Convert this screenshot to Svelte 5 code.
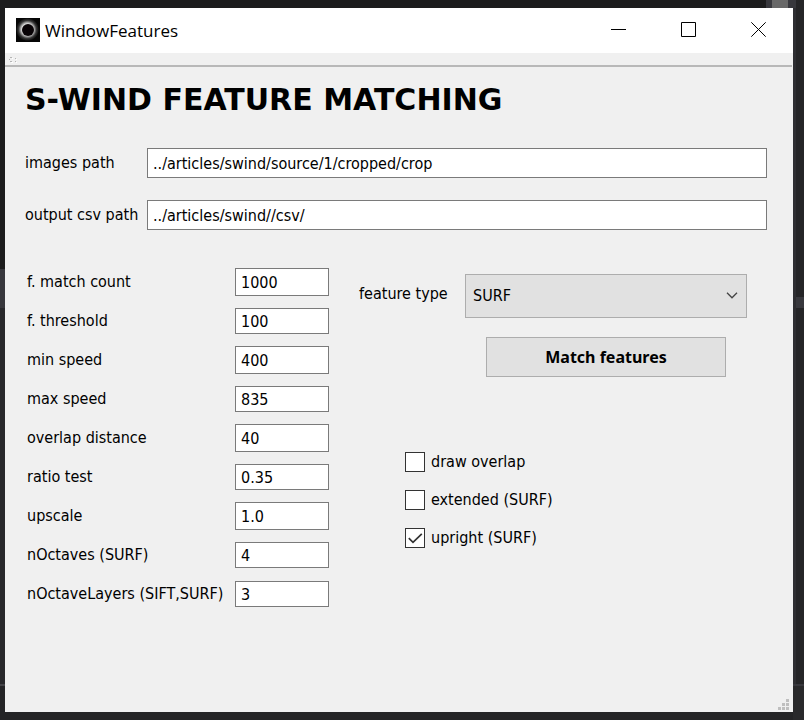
<script>
  const paths = $state([
    { id: 'images', label: 'images path', value: '../articles/swind/source/1/cropped/crop' },
    { id: 'csv', label: 'output csv path', value: '../articles/swind//csv/' }
  ]);

  const params = $state([
    { id: 'count', label: 'f. match count', value: '1000' },
    { id: 'threshold', label: 'f. threshold', value: '100' },
    { id: 'min', label: 'min speed', value: '400' },
    { id: 'max', label: 'max speed', value: '835' },
    { id: 'overlap', label: 'overlap distance', value: '40' },
    { id: 'ratio', label: 'ratio test', value: '0.35' },
    { id: 'upscale', label: 'upscale', value: '1.0' },
    { id: 'octaves', label: 'nOctaves (SURF)', value: '4' },
    { id: 'layers', label: 'nOctaveLayers (SIFT,SURF)', value: '3' }
  ]);

  const options = $state([
    { label: 'draw overlap', on: false },
    { label: 'extended (SURF)', on: false },
    { label: 'upright (SURF)', on: true }
  ]);

  let featureType = $state('SURF');
</script>

<div class="desktop">
  <main class="window">
    <header class="titlebar">
      <svg class="appicon" width="24" height="24" viewBox="0 0 24 24" aria-hidden="true">
        <defs>
          <radialGradient id="corona">
            <stop offset="0.5" stop-color="#ddd" />
            <stop offset="0.62" stop-color="#999" />
            <stop offset="0.78" stop-color="#383838" />
            <stop offset="1" stop-color="#060606" />
          </radialGradient>
        </defs>
        <rect width="24" height="24" fill="#060606" />
        <circle cx="11.5" cy="11.5" r="11.5" fill="url(#corona)" />
        <circle cx="12" cy="12" r="6" fill="#080306" />
      </svg>
      <span class="name">WindowFeatures</span>
      <div class="controls">
        <button aria-label="Minimize">
          <svg width="15" height="15" viewBox="0 0 15 15"><path d="M0 7.5H15" /></svg>
        </button>
        <button aria-label="Maximize">
          <svg width="15" height="15" viewBox="0 0 15 15"><path d="M.5.5H14.5V14.5H.5Z" /></svg>
        </button>
        <button aria-label="Close">
          <svg width="15" height="15" viewBox="0 0 15 15"><path d="M.3.3 14.7 14.7M14.7.3.3 14.7" /></svg>
        </button>
      </div>
    </header>

    <div class="toolbar">
      <svg width="8" height="6" viewBox="0 0 8 6" aria-hidden="true">
        <path d="M1 0h2v1H1zM0 2h1v1H0zM1 4h2v1H1zM6 1h1v1H6zM6 4h1v1H6z" fill="#b4b4b4" />
        <path d="M3 1h1v1H3zM2 5h2v1H2zM7 2h1v1H7zM7 5h1v1H7z" fill="#fff" />
      </svg>
    </div>

    <section class="content">
      <h1>S-WIND FEATURE MATCHING</h1>

      <div class="paths">
        {#each paths as p (p.id)}
          <label for={p.id}>{p.label}</label>
          <input id={p.id} type="text" bind:value={p.value} />
        {/each}
      </div>

      <div class="settings">
        <div class="params">
          {#each params as p (p.id)}
            <div class="param">
              <label for={p.id}>{p.label}</label>
              <input id={p.id} type="text" bind:value={p.value} />
            </div>
          {/each}
        </div>

        <div class="side">
          <div class="feature">
            <label for="type">feature type</label>
            <div class="pick">
              <div class="combo">
                <select id="type" bind:value={featureType}>
                  <option>SURF</option>
                  <option>SIFT</option>
                </select>
                <svg width="12" height="7" viewBox="0 0 12 7" aria-hidden="true">
                  <path d="M1 .8 6 5.8 11 .8" />
                </svg>
              </div>
              <button class="match">Match features</button>
            </div>
          </div>

          <div class="options">
            {#each options as o (o.label)}
              <label><input type="checkbox" bind:checked={o.on} />{o.label}</label>
            {/each}
          </div>
        </div>
      </div>
    </section>

    <footer>
      <svg width="11" height="11" viewBox="0 0 11 11" aria-hidden="true">
        <path d="M8 0h3v3H8zM4 4h3v3H4zM8 4h3v3H8zM0 8h3v3H0zM4 8h3v3H4zM8 8h3v3H8z" fill="#bfbfbf" />
      </svg>
    </footer>
  </main>
</div>

<style>
  :global(body) {
    margin: 0;
  }

  .desktop {
    box-sizing: border-box;
    display: flex;
    min-height: 100vh;
    padding: 8px 11px 8px 5px;
    font: 16px/20px 'DejaVu Sans Condensed', sans-serif;
    color: #000;
    background:
      linear-gradient(#686868, #686868) right 16px top 0 / 16px 8px no-repeat,
      linear-gradient(#38383d, #38383d) right 8px top 0 / 30px 8px no-repeat,
      linear-gradient(#252527 297px, #38383d 297px 308px, #252527 308px 684px, #38383d 684px 686px, #29292b 686px) right / 8px 100% no-repeat,
      linear-gradient(#2e2e32 684px, #38383d 684px 686px, #29292b 686px) right / 11px 100% no-repeat,
      linear-gradient(#1c1c1d 269px, #37373c 269px 308px, #28282b 308px 684px, #444448 684px 686px, #242426 686px);
  }

  .window {
    flex: 1;
    display: flex;
    flex-direction: column;
    background: #f0f0f0;
  }

  .titlebar {
    display: flex;
    align-items: center;
    height: 45px;
    padding-left: 11px;
    background: #fff;
  }

  .appicon {
    margin-bottom: 2px;
  }

  .name {
    margin-left: 5px;
    font: 17px/24px 'Open Sans', sans-serif;
  }

  .controls {
    display: flex;
    align-self: stretch;
    margin-left: auto;
  }

  .controls button {
    display: flex;
    align-items: center;
    justify-content: center;
    width: 70px;
    padding: 0 0 2px;
    border: 0;
    background: none;
  }

  .controls path {
    fill: none;
    stroke: #000;
  }

  .toolbar {
    display: flex;
    height: 8px;
    padding: 4px 0 0 4px;
    margin-right: 1px;
    border-bottom: 2px solid #b8b8b8;
  }

  .content {
    flex: 1;
    padding: 13px 26px 0 20px;
  }

  h1 {
    margin: 0;
    font: bold 30px/40px 'DejaVu Sans', sans-serif;
    white-space: nowrap;
  }

  input[type='text'] {
    box-sizing: border-box;
    min-width: 0;
    padding: 0 5px;
    border: 1px solid #7a7a7a;
    border-radius: 0;
    outline: 0;
    font: inherit;
    color: inherit;
    background: #fff;
  }

  .paths {
    display: grid;
    grid-template-columns: 114px 1fr;
    align-items: center;
    gap: 22px 8px;
    margin-top: 28px;
    white-space: nowrap;
  }

  .paths input {
    height: 30px;
  }

  .settings {
    display: flex;
    gap: 30px;
    margin: 38px 20px 0 2px;
  }

  .params {
    display: flex;
    flex-direction: column;
    gap: 11px;
  }

  .param {
    display: grid;
    grid-template-columns: 208px 94px;
    align-items: center;
    height: 28px;
    white-space: nowrap;
  }

  .param input {
    height: 28px;
  }

  .param:nth-child(even) input,
  .param:last-child input {
    height: 26px;
  }

  .side {
    flex: 1;
    padding-top: 6px;
  }

  .feature {
    display: flex;
    gap: 16px;
    white-space: nowrap;
  }

  .feature > label {
    width: 90px;
    line-height: 40px;
  }

  .pick {
    flex: 1;
    display: flex;
    flex-direction: column;
    align-items: center;
    gap: 19px;
  }

  .combo {
    position: relative;
    width: 100%;
  }

  select {
    display: block;
    box-sizing: border-box;
    width: 100%;
    height: 44px;
    padding: 0 7px;
    border: 1px solid #adadad;
    border-radius: 0;
    appearance: none;
    font: inherit;
    color: inherit;
    background: #e1e1e1;
  }

  .combo svg {
    position: absolute;
    right: 9px;
    top: 18px;
    pointer-events: none;
  }

  .combo path {
    fill: none;
    stroke: #444;
    stroke-width: 1.3;
  }

  .match {
    width: 240px;
    height: 40px;
    padding: 0;
    border: 1px solid #adadad;
    font: bold 16px/20px 'Noto Sans', sans-serif;
    color: inherit;
    background: #e1e1e1;
  }

  .options {
    display: flex;
    flex-direction: column;
    align-items: flex-start;
    gap: 18px;
    margin: 75px 0 0 46px;
  }

  .options label {
    display: flex;
    align-items: center;
    gap: 6px;
  }

  .options input {
    box-sizing: border-box;
    width: 20px;
    height: 20px;
    margin: 0;
    border: 1px solid #333;
    appearance: none;
    background: #fff;
  }

  .options input:checked {
    background: #fff url("data:image/svg+xml,%3Csvg xmlns='http://www.w3.org/2000/svg' viewBox='0 0 18 18'%3E%3Cpath d='M2.8 9.2 7 13.4 15.8 4.8' fill='none' stroke='%23333' stroke-width='1.7'/%3E%3C/svg%3E") center / 18px no-repeat;
  }

  footer {
    display: flex;
    justify-content: flex-end;
    padding: 0 4px 2px;
  }
</style>
